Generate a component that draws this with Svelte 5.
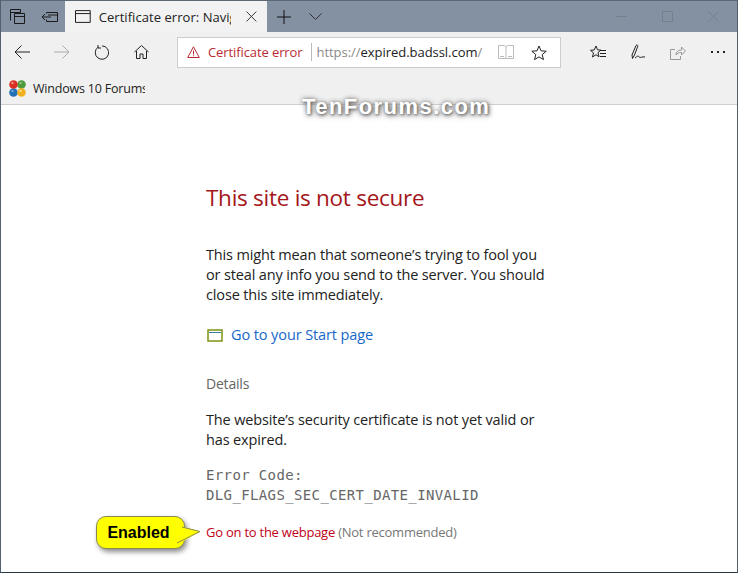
<script lang="ts">
	const ink = '#1a1a1a';
</script>

<div class="window">
	<header class="titlebar">
		<div class="tab-tools">
			<button class="icon-btn" aria-label="Tabs">
				<svg width="16" height="16" viewBox="0 0 16 16" fill="none" stroke={ink}><path d="M.5 11.500V.5h10v3M.5 3.500h10"/><path d="M4.500 4.500h10v10h-10zM4.500 7.500h10"/></svg>
			</button>
			<button class="icon-btn" aria-label="Set aside">
				<svg width="16" height="14" viewBox="0 0 16 14" fill="none" stroke={ink}><path d="M4.500 3.500V2.500h11v9h-11V9.500M6 5h9.500M0 7h9M3 4 0 7l3 3"/></svg>
			</button>
		</div>
		<div class="tab">
			<svg width="16" height="14" viewBox="0 0 16 14" fill="none" stroke={ink}><path d="M.5.500h15v12H.5zM.5 3.500h15"/></svg>
			<span class="tab-title">Certificate error: Navigation blocked</span>
			<svg class="tab-close" width="11" height="11" viewBox="0 0 11 11" fill="none" stroke="#333"><path d="M.5.500l10 10M10.500.500l-10 10"/></svg>
		</div>
		<div class="tab-actions">
			<svg width="14" height="14" viewBox="0 0 14 14" fill="none" stroke="#111"><path d="M7 0v14M0 7h14"/></svg>
			<svg width="13" height="7" viewBox="0 0 13 7" fill="none" stroke="#333"><path d="M.5.500l6 6 6-6"/></svg>
		</div>
		<div class="caption">
			<svg width="11" height="11" viewBox="0 0 11 11" fill="none" stroke="#75808c"><path d="M0 5.500h11"/></svg>
			<svg width="11" height="11" viewBox="0 0 11 11" fill="none" stroke="#75808c"><path d="M.5.500h10v10H.5z"/></svg>
			<svg width="11" height="11" viewBox="0 0 11 11" fill="none" stroke="#75808c"><path d="M.5.500l10 10M10.500.500l-10 10"/></svg>
		</div>
	</header>

	<nav class="toolbar">
		<div class="nav-btns">
			<svg width="16" height="14" viewBox="0 0 16 14" fill="none" stroke="#222"><path d="M16 7H1M7.500.500 1 7l6.500 6.500"/></svg>
			<svg width="16" height="14" viewBox="0 0 16 14" fill="none" stroke="#aaa"><path d="M0 7h15M8.500.500 15 7l-6.500 6.500"/></svg>
			<svg width="15" height="15" viewBox="0 0 15 15" fill="none" stroke="#222"><path d="M4 2.200A6.700 6.700 0 1 0 8 .900M4 0v3h3"/></svg>
			<svg class="home" width="15" height="14" viewBox="0 0 15 14" fill="none" stroke="#222"><path d="M.500 7 7.500.500l7 6.500M2.500 6v7.500h3.500V9h3v4.500h3.500V6"/></svg>
		</div>
		<div class="address">
			<div class="cert">
				<svg width="13" height="12" viewBox="0 0 13 12" fill="none" stroke="#b92c33"><path d="M6.500.800 12.300 11.500H.700zM6.500 4.500v4M6.500 9.300v1"/></svg>
				<span>Certificate error</span>
			</div>
			<div class="url"><span class="scheme">https://</span>expired.badssl.com<span class="scheme">/</span></div>
			<svg class="reading" width="16" height="14" viewBox="0 0 16 14" fill="none" stroke="#bbb"><path d="M.5.500h6l1.500 1 1.500-1h6v13h-15zM8 1.500v12M2 11.500h4M10 11.500h4"/></svg>
			<svg class="star" width="16" height="15" viewBox="0 0 16 15" fill="none" stroke="#222"><path d="m8 1 2 4.800 5.200.4-4 3.400 1.300 5L8 11.900l-4.500 2.700 1.300-5-4-3.400 5.200-.4z"/></svg>
		</div>
		<div class="hub">
			<svg width="16" height="15" viewBox="0 0 16 15" fill="none" stroke="#222"><path d="m6 1 1.500 3.800 3.500.3-3 2.500 1 4.200L6 9.700 2.500 12l1-4.200-3-2.500 3.700-.3z"/><path d="M10 5.500h6M10 8.500h6M10 11.500h6"/></svg>
			<svg width="15" height="16" viewBox="0 0 15 16" fill="none" stroke="#222"><path d="M1.500 14.500 1 11l4-9.500c.6-1 2.200-.4 1.800.7L3.500 11zM4 14c1.200-.5 2-2 3-2s1 1.500 2 1.500 2-.8 5-.6"/></svg>
			<svg width="16" height="15" viewBox="0 0 16 15" fill="none" stroke="#999"><path d="M5 4.500H.5v10h10V11M6 10c0-3 2-5 5.500-5V2l4 4-4 4V7.500C9 7.500 7 8 6 10z"/></svg>
			<div class="more"><i></i><i></i><i></i></div>
		</div>
	</nav>

	<div class="favbar">
		<svg width="17" height="17" viewBox="0 0 17 17">
			<circle cx="12.500" cy="4.500" r="4.300" fill="#4f9a3c"/>
			<circle cx="4.500" cy="12.500" r="4.300" fill="#2470b8"/>
			<circle cx="12.500" cy="12.500" r="4.300" fill="#f2b01e"/>
			<circle cx="4.500" cy="4.500" r="4.300" fill="#dc2f24"/>
			<circle cx="3.500" cy="3" r="1.300" fill="#f08a7c"/>
			<circle cx="11.500" cy="3" r="1.300" fill="#8cc27c"/>
			<circle cx="3.500" cy="11" r="1.300" fill="#6ea6dc"/>
			<circle cx="11.500" cy="11" r="1.300" fill="#f9dc7c"/>
		</svg>
		<span class="fav-label">Windows 10 Forums</span>
	</div>

	<main class="page">
		<div class="content">
			<h1>This site is not secure</h1>
			<p class="lead">This might mean that someone’s trying to fool you or steal any info you send to the server. You should close this site immediately.</p>
			<div class="start">
				<svg width="16" height="13" viewBox="0 0 16 13" fill="none"><path d="M1 1h14v11H1z" stroke="#7c9414" stroke-width="1.500"/><path d="M2 3.500h12" stroke="#3d7f9a"/></svg>
				<span>Go to your Start page</span>
			</div>
			<div class="details">Details</div>
			<p class="why">The website’s security certificate is not yet valid or has expired.</p>
			<div class="code">Error Code:<br />DLG_FLAGS_SEC_CERT_DATE_INVALID</div>
			<div class="proceed"><span class="go">Go on to the webpage</span> (Not recommended)</div>
		</div>
		<div class="callout">
			Enabled
			<svg class="tail" width="30" height="26" viewBox="0 0 30 26"><path d="M0 4 20 9.500 2 20z" fill="#ffff00"/><path d="M2 5 20 9.500 -3 21" fill="#ffff00" stroke="#8a8a50"/></svg>
		</div>
	</main>
	<div class="watermark">TenForums.com</div>
</div>

<style>
	:global(body) {
		margin: 0;
		background: #fff;
	}

	.window {
		position: relative;
		width: 738px;
		height: 573px;
		overflow: hidden;
		display: flex;
		flex-direction: column;
		font-family: "Open Sans", sans-serif;
		box-sizing: border-box;
		border-bottom: 1px solid #24384a;
		border-left: 1px solid #50606e;
		border-right: 1px solid #50606e;
	}

	.titlebar {
		height: 32px;
		flex: none;
		display: flex;
		align-items: center;
		background: #8391a3;
		border-top: 1px solid #5c6875;
		box-sizing: border-box;
	}

	.tab-tools {
		width: 64px;
		display: flex;
		align-items: center;
		gap: 16px;
		padding-left: 9px;
		box-sizing: border-box;
	}

	.icon-btn {
		all: unset;
		display: flex;
	}

	.tab {
		width: 202px;
		height: 31px;
		background: #f2f2f2;
		display: flex;
		align-items: center;
		padding: 0 10px;
		box-sizing: border-box;
	}

	.tab-title {
		width: 135px;
		margin-left: 8px;
		overflow: hidden;
		white-space: nowrap;
		font-size: 13px;
		letter-spacing: 0.05px;
		color: #222;
	}

	.tab-close {
		margin-left: 15px;
	}

	.tab-actions {
		display: flex;
		align-items: center;
		gap: 18px;
		padding-left: 10px;
	}

	.caption {
		margin-left: auto;
		display: flex;
		gap: 35px;
		padding-right: 18px;
	}

	.toolbar {
		height: 40px;
		flex: none;
		display: flex;
		align-items: center;
		background: #f0f0f0;
	}

	.nav-btns {
		width: 176px;
		display: flex;
		align-items: center;
		gap: 24px;
		padding-left: 13px;
		box-sizing: border-box;
	}

	.home {
		margin-left: 1px;
	}

	.address {
		width: 384px;
		height: 31px;
		background: #fff;
		border: 1px solid #ccc;
		box-sizing: border-box;
		display: flex;
		align-items: center;
	}

	.cert {
		display: flex;
		align-items: center;
		gap: 8px;
		height: 18px;
		padding: 0 8px 0 9px;
		border-right: 1px solid #bbb;
		color: #b92c33;
		font-size: 13px;
		letter-spacing: -0.1px;
	}

	.url {
		margin-left: 5px;
		font-size: 13px;
		letter-spacing: -0.04px;
		color: #222;
		white-space: nowrap;
	}

	.scheme {
		color: #8a8a8a;
	}

	.reading {
		margin-left: auto;
	}

	.star {
		margin: 0 13px 0 17px;
	}

	.hub {
		flex: 1;
		display: flex;
		align-items: center;
		gap: 24.500px;
		padding-left: 29px;
	}

	.more {
		display: flex;
		gap: 4px;
	}

	.more i {
		width: 2px;
		height: 2px;
		background: #222;
	}

	.favbar {
		height: 33px;
		flex: none;
		display: flex;
		align-items: center;
		gap: 7px;
		padding-left: 8px;
		background: #f0f0f0;
		border-bottom: 1px solid #cfcfcf;
		box-sizing: border-box;
	}

	.fav-label {
		width: 112px;
		overflow: hidden;
		white-space: nowrap;
		font-size: 12.500px;
		letter-spacing: -0.2px;
		color: #222;
	}

	.page {
		position: relative;
		flex: 1;
		background: #fff;
	}

	.content {
		width: 345px;
		padding: 78px 0 0 205px;
	}

	h1 {
		margin: 0;
		font-size: 22.500px;
		font-weight: 400;
		line-height: 30px;
		letter-spacing: -0.27px;
		color: #a4161a;
	}

	.lead {
		margin: 32px 0 0;
		font-size: 14.500px;
		line-height: 20px;
		letter-spacing: -0.15px;
		color: #222;
	}

	.start {
		margin-top: 20px;
		display: flex;
		align-items: center;
		gap: 8px;
		font-size: 14.500px;
		line-height: 20px;
		letter-spacing: -0.1px;
		color: #1668c8;
	}

	.start svg {
		margin-left: 1px;
	}

	.details {
		margin-top: 29px;
		font-size: 14px;
		line-height: 20px;
		letter-spacing: -0.2px;
		color: #666;
	}

	.why {
		margin: 16px 0 0;
		font-size: 14.500px;
		line-height: 20px;
		letter-spacing: -0.15px;
		color: #222;
	}

	.code {
		margin-top: 15px;
		font-family: "DejaVu Sans Mono", monospace;
		font-size: 14px;
		line-height: 20px;
		letter-spacing: 0.37px;
		color: #666;
		white-space: nowrap;
	}

	.proceed {
		margin-top: 17px;
		font-size: 13px;
		line-height: 20px;
		letter-spacing: -0.24px;
		color: #777;
		white-space: nowrap;
	}

	.go {
		color: #c00018;
	}

	.callout {
		position: absolute;
		left: 95px;
		top: 411px;
		width: 89px;
		height: 33px;
		padding-right: 4px;
		box-sizing: border-box;
		display: flex;
		align-items: center;
		justify-content: center;
		background: #ffff00;
		border: 1px solid #8a8a50;
		border-radius: 10px;
		box-shadow: 2px 3px 5px rgba(0, 0, 0, 0.45);
		font-family: "Liberation Sans", sans-serif;
		font-weight: 700;
		font-size: 16px;
		color: #000;
	}

	.tail {
		position: absolute;
		left: 83px;
		top: 5px;
		overflow: visible;
	}

	.watermark {
		position: absolute;
		left: 301px;
		top: 93px;
		font-family: "Liberation Sans", sans-serif;
		font-weight: 700;
		font-size: 22px;
		letter-spacing: 1.450px;
		line-height: 28px;
		color: #fff;
		text-shadow: 1px 1px 3px #666, 0 0 5px #888, 1px 2px 6px #999;
		white-space: nowrap;
	}
</style>
